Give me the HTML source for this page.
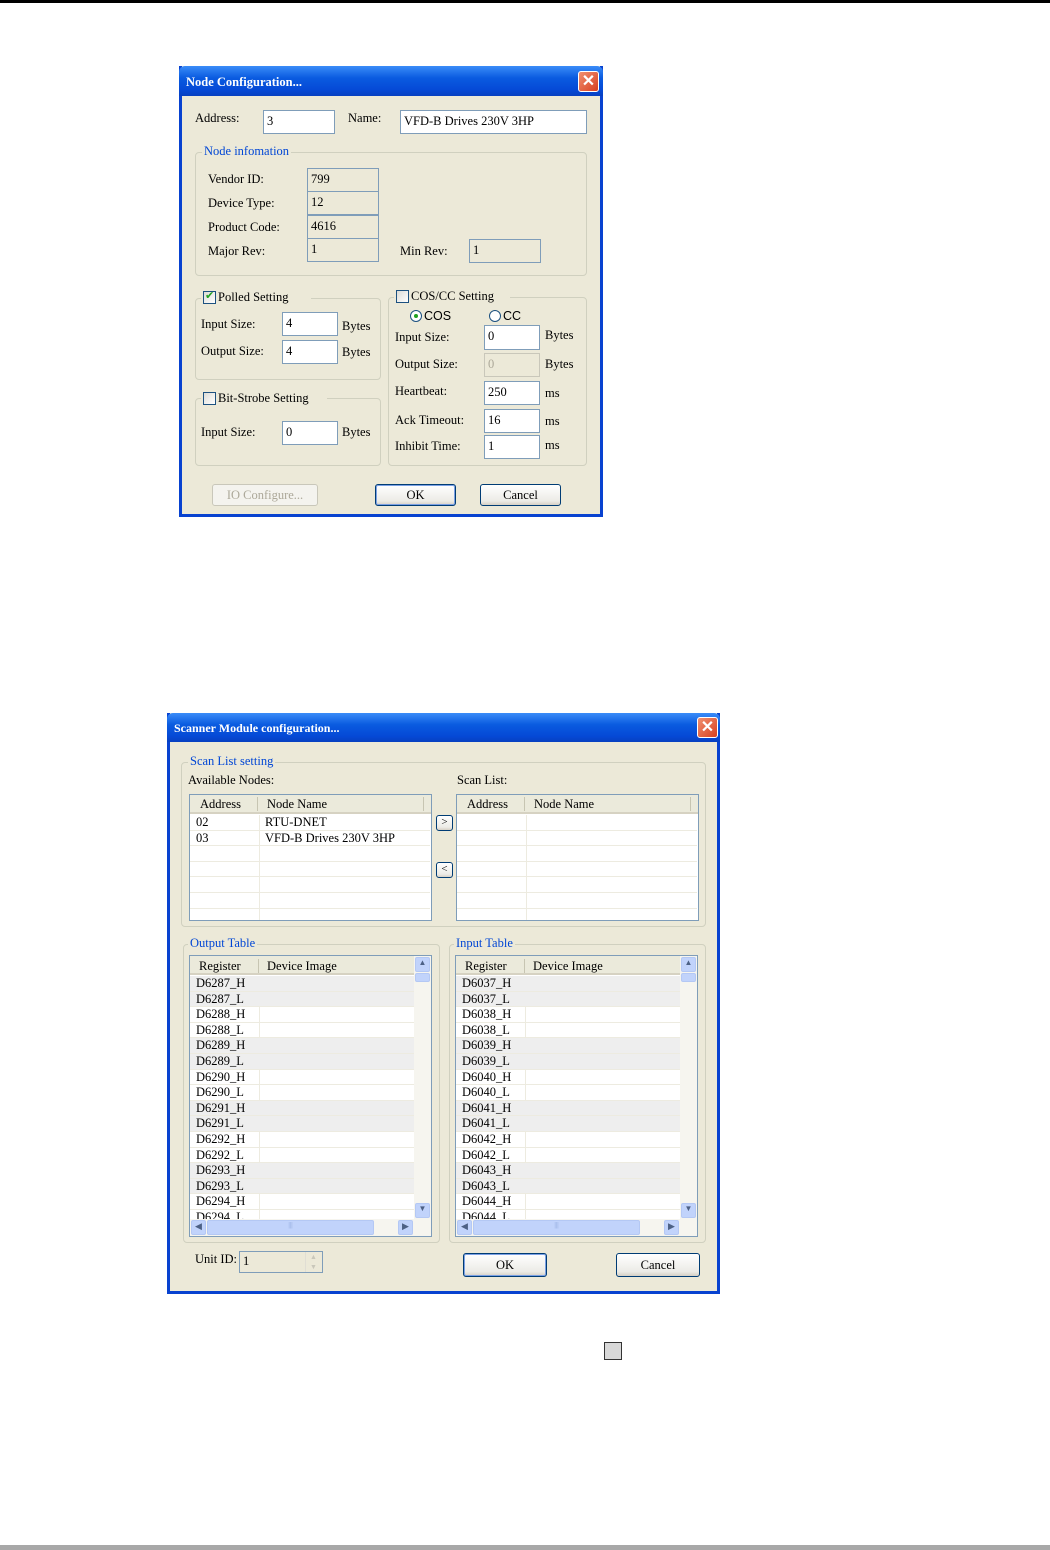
<!DOCTYPE html>
<html><head><meta charset="utf-8"><style>
*{box-sizing:border-box;margin:0;padding:0}
body{width:1050px;height:1550px;background:#fff;position:relative;overflow:hidden;font-family:"Liberation Serif",serif;font-size:12.5px;color:#000}
.a{position:absolute;white-space:nowrap}
.dlg{position:absolute;background:#ECE9D8;border:3px solid #0842D0;border-top:none}
.tb{position:absolute;left:-3px;right:-3px;top:0;background:linear-gradient(#3A8CF8,#0A5BE0 40%,#0549D6 80%,#0740C0);color:#fff;font-weight:bold;font-size:12px;padding-left:7px;border-radius:6px 6px 0 0}
.x{position:absolute;width:21px;height:21px;background:linear-gradient(135deg,#F09070,#D84020);border:1px solid #fff;border-radius:3px;color:#fff;font:bold 16px "Liberation Sans",sans-serif;text-align:center;line-height:19px}
.in{position:absolute;background:#fff;border:1px solid #7F9DB9;padding:3px 3px 0;font-size:12.5px}
.ro{position:absolute;border:1px solid #7F9DB9;padding:3px 3px 0;background:#ECE9D8}
.grp{position:absolute;border:1px solid #D0D0BF;border-radius:4px}
.lg{position:absolute;background:#ECE9D8;padding:0 2px;color:#0046D5}
.btn{position:absolute;border:1px solid #003C74;border-radius:3px;background:linear-gradient(#fff,#ECEBE6 80%,#D6D0C5);text-align:center}
.cb{position:absolute;width:13px;height:13px;border:1px solid #1C5180;background:linear-gradient(135deg,#DCDCD7,#fff)}
.list{position:absolute;background:#fff;border:1px solid #7F9DB9;overflow:hidden}
.hd{position:absolute;left:0;right:0;top:0;height:19px;background:#EBEADB;border-bottom:2px solid #D6D2C2}
.row{position:absolute;left:0;height:15.6px;border-bottom:1px solid #EDEBE0;line-height:15px;padding-left:6px}
.g{background:#EEEEEE}
</style></head><body>
<div class="a" style="left:0;top:0;width:1050px;height:3px;background:#000"></div>
<div class="a" style="left:0;top:1545px;width:1050px;height:5px;background:#A8A8A8"></div>
<div class="a" style="left:604px;top:1342px;width:18px;height:18px;background:#D8D8D8;border:1px solid #333"></div>

<!-- Dialog 1 -->
<div class="dlg" style="left:179px;top:66px;width:424px;height:451px">
<div class="tb" style="height:30px;line-height:32px;font-size:12.5px">Node Configuration...</div>
<div class="x" style="left:396px;top:5px">✕</div>
</div>
<div class="a" style="left:195px;top:111px">Address:</div>
<div class="in" style="left:263px;top:110px;width:72px;height:24px">3</div>
<div class="a" style="left:348px;top:111px">Name:</div>
<div class="in" style="left:400px;top:110px;width:187px;height:24px">VFD-B Drives 230V 3HP</div>
<div class="grp" style="left:195px;top:152px;width:392px;height:124px"></div>
<div class="lg a" style="left:202px;top:144px">Node infomation</div>
<div class="a" style="left:208px;top:172px">Vendor ID:</div>
<div class="a" style="left:208px;top:196px">Device Type:</div>
<div class="a" style="left:208px;top:220px">Product Code:</div>
<div class="a" style="left:208px;top:244px">Major Rev:</div>
<div class="ro" style="left:307px;top:168px;width:72px;height:24px">799</div>
<div class="ro" style="left:307px;top:191px;width:72px;height:24px">12</div>
<div class="ro" style="left:307px;top:215px;width:72px;height:24px">4616</div>
<div class="ro" style="left:307px;top:238px;width:72px;height:24px">1</div>
<div class="a" style="left:400px;top:244px">Min Rev:</div>
<div class="ro" style="left:469px;top:239px;width:72px;height:24px">1</div>

<div class="grp" style="left:195px;top:298px;width:186px;height:82px"></div>
<div class="a" style="left:201px;top:289px;width:110px;height:16px;background:#ECE9D8"></div>
<div class="cb" style="left:203px;top:291px"><span style="position:absolute;left:1px;top:-3px;color:#21A121;font:bold 11px 'DejaVu Sans',sans-serif">✔</span></div>
<div class="a" style="left:218px;top:290px">Polled Setting</div>
<div class="a" style="left:201px;top:317px">Input Size:</div>
<div class="in" style="left:282px;top:312px;width:56px;height:24px">4</div>
<div class="a" style="left:342px;top:319px">Bytes</div>
<div class="a" style="left:201px;top:344px">Output Size:</div>
<div class="in" style="left:282px;top:340px;width:56px;height:24px">4</div>
<div class="a" style="left:342px;top:345px">Bytes</div>

<div class="grp" style="left:195px;top:398px;width:186px;height:68px"></div>
<div class="a" style="left:201px;top:390px;width:126px;height:16px;background:#ECE9D8"></div>
<div class="cb" style="left:203px;top:392px"></div>
<div class="a" style="left:218px;top:391px">Bit-Strobe Setting</div>
<div class="a" style="left:201px;top:425px">Input Size:</div>
<div class="in" style="left:282px;top:421px;width:56px;height:24px">0</div>
<div class="a" style="left:342px;top:425px">Bytes</div>

<div class="grp" style="left:388px;top:297px;width:199px;height:169px"></div>
<div class="a" style="left:394px;top:289px;width:116px;height:16px;background:#ECE9D8"></div>
<div class="cb" style="left:396px;top:290px"></div>
<div class="a" style="left:411px;top:289px">COS/CC Setting</div>
<div class="a" style="left:410px;top:310px;width:12px;height:12px;border:1px solid #1C5180;border-radius:50%;background:#fff"><div class="a" style="left:3px;top:3px;width:4px;height:4px;border-radius:50%;background:#21A121"></div></div>
<div class="a" style="left:424px;top:309px;font-family:'Liberation Sans',sans-serif">COS</div>
<div class="a" style="left:489px;top:310px;width:12px;height:12px;border:1px solid #1C5180;border-radius:50%;background:#fff"></div>
<div class="a" style="left:503px;top:309px;font-family:'Liberation Sans',sans-serif">CC</div>
<div class="a" style="left:395px;top:330px">Input Size:</div>
<div class="in" style="left:484px;top:325px;width:56px;height:25px">0</div>
<div class="a" style="left:545px;top:328px">Bytes</div>
<div class="a" style="left:395px;top:357px">Output Size:</div>
<div class="ro" style="left:484px;top:353px;width:56px;height:24px;color:#ACA899;border-color:#C9C7BA">0</div>
<div class="a" style="left:545px;top:357px">Bytes</div>
<div class="a" style="left:395px;top:384px">Heartbeat:</div>
<div class="in" style="left:484px;top:381px;width:56px;height:24px">250</div>
<div class="a" style="left:545px;top:386px">ms</div>
<div class="a" style="left:395px;top:413px">Ack Timeout:</div>
<div class="in" style="left:484px;top:409px;width:56px;height:24px">16</div>
<div class="a" style="left:545px;top:414px">ms</div>
<div class="a" style="left:395px;top:439px">Inhibit Time:</div>
<div class="in" style="left:484px;top:435px;width:56px;height:24px">1</div>
<div class="a" style="left:545px;top:438px">ms</div>

<div class="btn" style="left:212px;top:484px;width:106px;height:22px;line-height:20px;color:#ACA899;border-color:#C9C7BA;background:#F4F3EE">IO Configure...</div>
<div class="btn" style="left:375px;top:484px;width:81px;height:22px;line-height:20px;box-shadow:inset 0 0 0 1px #7BA0E4">OK</div>
<div class="btn" style="left:480px;top:484px;width:81px;height:22px;line-height:20px">Cancel</div>

<!-- Dialog 2 -->
<div class="dlg" style="left:167px;top:713px;width:553px;height:581px">
<div class="tb" style="height:29px;line-height:31px">Scanner Module configuration...</div>
<div class="x" style="left:527px;top:4px">✕</div>
</div>
<div class="grp" style="left:181px;top:762px;width:525px;height:165px"></div>
<div class="lg a" style="left:188px;top:754px">Scan List setting</div>
<div class="a" style="left:188px;top:773px">Available Nodes:</div>
<div class="a" style="left:457px;top:773px">Scan List:</div>

<div class="list" style="left:189px;top:794px;width:243px;height:127px">
<div class="hd"><span class="a" style="left:10px;top:2px">Address</span><span class="a" style="left:67px;top:2px;width:1px;height:14px;background:#C7C5B2"></span><span class="a" style="left:77px;top:2px">Node Name</span><span class="a" style="left:233px;top:2px;width:1px;height:14px;background:#C7C5B2"></span></div>
<div class="a" style="left:69px;top:20px;width:1px;height:107px;background:#EDEBE0"></div>
<div class="row" style="top:20px;width:240px">02<span class="a" style="left:75px">RTU-DNET</span></div>
<div class="row" style="top:35.6px;width:240px">03<span class="a" style="left:75px">VFD-B Drives 230V 3HP</span></div>
<div class="row" style="top:51.2px;width:240px"></div><div class="row" style="top:66.8px;width:240px"></div><div class="row" style="top:82.4px;width:240px"></div><div class="row" style="top:98px;width:240px"></div>
</div>
<div class="btn" style="left:436px;top:815px;width:17px;height:16px;line-height:13px;font-size:11px">&gt;</div>
<div class="btn" style="left:436px;top:862px;width:17px;height:16px;line-height:13px;font-size:11px">&lt;</div>
<div class="list" style="left:456px;top:794px;width:243px;height:127px">
<div class="hd"><span class="a" style="left:10px;top:2px">Address</span><span class="a" style="left:67px;top:2px;width:1px;height:14px;background:#C7C5B2"></span><span class="a" style="left:77px;top:2px">Node Name</span><span class="a" style="left:233px;top:2px;width:1px;height:14px;background:#C7C5B2"></span></div>
<div class="a" style="left:69px;top:20px;width:1px;height:107px;background:#EDEBE0"></div>
<div class="row" style="top:20px;width:240px"></div><div class="row" style="top:35.6px;width:240px"></div><div class="row" style="top:51.2px;width:240px"></div><div class="row" style="top:66.8px;width:240px"></div><div class="row" style="top:82.4px;width:240px"></div><div class="row" style="top:98px;width:240px"></div>
</div>

<!-- Output table -->
<div class="grp" style="left:183px;top:944px;width:257px;height:299px"></div>
<div class="lg a" style="left:188px;top:936px">Output Table</div>
<div class="list" style="left:189px;top:955px;width:243px;height:282px">
<div class="hd" style="right:17px"><span class="a" style="left:9px;top:3px">Register</span><span class="a" style="left:68px;top:3px;width:1px;height:14px;background:#C7C5B2"></span><span class="a" style="left:77px;top:3px">Device Image</span></div>
<div class="a" style="left:69px;top:21px;width:1px;height:244px;background:#EDEBE0"></div>
<div class="row g" style="top:20px;width:225px">D6287_H</div>
<div class="row g" style="top:35.6px;width:225px">D6287_L</div>
<div class="row" style="top:51.2px;width:225px">D6288_H</div>
<div class="row" style="top:66.8px;width:225px">D6288_L</div>
<div class="row g" style="top:82.4px;width:225px">D6289_H</div>
<div class="row g" style="top:98px;width:225px">D6289_L</div>
<div class="row" style="top:113.6px;width:225px">D6290_H</div>
<div class="row" style="top:129.2px;width:225px">D6290_L</div>
<div class="row g" style="top:144.8px;width:225px">D6291_H</div>
<div class="row g" style="top:160.4px;width:225px">D6291_L</div>
<div class="row" style="top:176px;width:225px">D6292_H</div>
<div class="row" style="top:191.6px;width:225px">D6292_L</div>
<div class="row g" style="top:207.2px;width:225px">D6293_H</div>
<div class="row g" style="top:222.8px;width:225px">D6293_L</div>
<div class="row" style="top:238.4px;width:225px">D6294_H</div>
<div class="row" style="top:254px;width:225px">D6294_L</div>
<div class="a" style="right:0;top:0;width:17px;height:264px;background:#F6F5EF"></div>
<div class="a" style="right:1px;top:1px;width:15px;height:15px;background:#C1D3FB;border:1px solid #B4C8F4;border-radius:2px;font-size:8px;text-align:center;color:#4D6185">▲</div>
<div class="a" style="right:1px;top:17px;width:15px;height:9px;background:#C1D3FB;border:1px solid #B4C8F4;border-radius:2px"></div>
<div class="a" style="right:1px;top:247px;width:15px;height:15px;background:#C1D3FB;border:1px solid #B4C8F4;border-radius:2px;font-size:8px;text-align:center;color:#4D6185">▼</div>
<div class="a" style="left:0;right:0;top:263px;height:18px;background:#F6F5EF"></div>
<div class="a" style="left:1px;top:264px;width:15px;height:15px;background:#C1D3FB;border:1px solid #B4C8F4;border-radius:2px;font-size:9px;text-align:center;color:#4D6185">◀</div>
<div class="a" style="left:17px;top:264px;width:167px;height:15px;background:#C1D3FB;border:1px solid #B4C8F4;border-radius:2px;font-size:7px;text-align:center;color:#8CA4D8">|||</div>
<div class="a" style="left:208px;top:264px;width:15px;height:15px;background:#C1D3FB;border:1px solid #B4C8F4;border-radius:2px;font-size:9px;text-align:center;color:#4D6185">▶</div>
</div>

<!-- Input table -->
<div class="grp" style="left:449px;top:944px;width:257px;height:299px"></div>
<div class="lg a" style="left:454px;top:936px">Input Table</div>
<div class="list" style="left:455px;top:955px;width:243px;height:282px">
<div class="hd" style="right:17px"><span class="a" style="left:9px;top:3px">Register</span><span class="a" style="left:68px;top:3px;width:1px;height:14px;background:#C7C5B2"></span><span class="a" style="left:77px;top:3px">Device Image</span></div>
<div class="a" style="left:69px;top:21px;width:1px;height:244px;background:#EDEBE0"></div>
<div class="row g" style="top:20px;width:225px">D6037_H</div>
<div class="row g" style="top:35.6px;width:225px">D6037_L</div>
<div class="row" style="top:51.2px;width:225px">D6038_H</div>
<div class="row" style="top:66.8px;width:225px">D6038_L</div>
<div class="row g" style="top:82.4px;width:225px">D6039_H</div>
<div class="row g" style="top:98px;width:225px">D6039_L</div>
<div class="row" style="top:113.6px;width:225px">D6040_H</div>
<div class="row" style="top:129.2px;width:225px">D6040_L</div>
<div class="row g" style="top:144.8px;width:225px">D6041_H</div>
<div class="row g" style="top:160.4px;width:225px">D6041_L</div>
<div class="row" style="top:176px;width:225px">D6042_H</div>
<div class="row" style="top:191.6px;width:225px">D6042_L</div>
<div class="row g" style="top:207.2px;width:225px">D6043_H</div>
<div class="row g" style="top:222.8px;width:225px">D6043_L</div>
<div class="row" style="top:238.4px;width:225px">D6044_H</div>
<div class="row" style="top:254px;width:225px">D6044_L</div>
<div class="a" style="right:0;top:0;width:17px;height:264px;background:#F6F5EF"></div>
<div class="a" style="right:1px;top:1px;width:15px;height:15px;background:#C1D3FB;border:1px solid #B4C8F4;border-radius:2px;font-size:8px;text-align:center;color:#4D6185">▲</div>
<div class="a" style="right:1px;top:17px;width:15px;height:9px;background:#C1D3FB;border:1px solid #B4C8F4;border-radius:2px"></div>
<div class="a" style="right:1px;top:247px;width:15px;height:15px;background:#C1D3FB;border:1px solid #B4C8F4;border-radius:2px;font-size:8px;text-align:center;color:#4D6185">▼</div>
<div class="a" style="left:0;right:0;top:263px;height:18px;background:#F6F5EF"></div>
<div class="a" style="left:1px;top:264px;width:15px;height:15px;background:#C1D3FB;border:1px solid #B4C8F4;border-radius:2px;font-size:9px;text-align:center;color:#4D6185">◀</div>
<div class="a" style="left:17px;top:264px;width:167px;height:15px;background:#C1D3FB;border:1px solid #B4C8F4;border-radius:2px;font-size:7px;text-align:center;color:#8CA4D8">|||</div>
<div class="a" style="left:208px;top:264px;width:15px;height:15px;background:#C1D3FB;border:1px solid #B4C8F4;border-radius:2px;font-size:9px;text-align:center;color:#4D6185">▶</div>
</div>

<div class="a" style="left:195px;top:1252px">Unit ID:</div>
<div class="ro" style="left:239px;top:1251px;width:84px;height:22px;padding:2px 3px">1</div>
<div class="a" style="left:305px;top:1252px;width:16px;height:20px;border-left:1px solid #E0DED4;color:#C9C7BA;font-size:7px;text-align:center;line-height:10px">▲<br>▼</div>
<div class="btn" style="left:463px;top:1253px;width:84px;height:24px;line-height:22px;box-shadow:inset 0 0 0 1px #7BA0E4">OK</div>
<div class="btn" style="left:616px;top:1253px;width:84px;height:24px;line-height:22px">Cancel</div>
</body></html>
